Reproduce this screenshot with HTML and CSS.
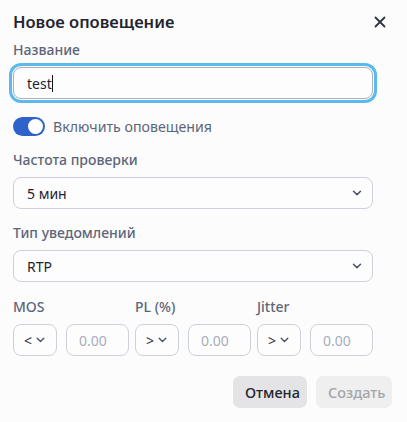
FILE: index.html
```html
<!DOCTYPE html>
<html lang="ru">
<head>
<meta charset="utf-8">
<link rel="stylesheet" href="styles.css">
</head>
<body>
<div class="dialog">
  <div class="header">
    <h1 class="title">Новое оповещение</h1>
    <button class="close" aria-label="close">
      <svg width="12" height="12" viewBox="0 0 12 12"><path d="M1.5 1.5 L10.5 10.5 M10.5 1.5 L1.5 10.5" stroke="#2d3340" stroke-width="1.8" stroke-linecap="round"/></svg>
    </button>
  </div>
  <div class="body">
    <div class="field">
      <label class="label">Название</label>
      <div class="input focus"><span class="value">test</span><span class="caret"></span></div>
    </div>
    <div class="toggle-row">
      <span class="switch"><span class="knob"></span></span>
      <span class="toggle-text">Включить оповещения</span>
    </div>
    <div class="field">
      <label class="label">Частота проверки</label>
      <div class="select"><span>5 мин</span><svg class="chev" width="10" height="6" viewBox="0 0 10 6"><path d="M1.5 1.2 L5 4.6 L8.5 1.2" fill="none" stroke="#4a5466" stroke-width="1.5" stroke-linecap="round" stroke-linejoin="round"/></svg></div>
    </div>
    <div class="field">
      <label class="label">Тип уведомлений</label>
      <div class="select"><span>RTP</span><svg class="chev" width="10" height="6" viewBox="0 0 10 6"><path d="M1.5 1.2 L5 4.6 L8.5 1.2" fill="none" stroke="#4a5466" stroke-width="1.5" stroke-linecap="round" stroke-linejoin="round"/></svg></div>
    </div>
    <div class="metrics">
      <div class="metric">
        <label class="label">MOS</label>
        <div class="pair">
          <div class="mini-select"><span>&lt;</span><svg width="9" height="6" viewBox="0 0 9 6"><path d="M1.2 1.2 L4.5 4.4 L7.8 1.2" fill="none" stroke="#4a5466" stroke-width="1.4" stroke-linecap="round" stroke-linejoin="round"/></svg></div>
          <div class="num">0.00</div>
        </div>
      </div>
      <div class="metric">
        <label class="label">PL (%)</label>
        <div class="pair">
          <div class="mini-select"><span>&gt;</span><svg width="9" height="6" viewBox="0 0 9 6"><path d="M1.2 1.2 L4.5 4.4 L7.8 1.2" fill="none" stroke="#4a5466" stroke-width="1.4" stroke-linecap="round" stroke-linejoin="round"/></svg></div>
          <div class="num">0.00</div>
        </div>
      </div>
      <div class="metric">
        <label class="label">Jitter</label>
        <div class="pair">
          <div class="mini-select"><span>&gt;</span><svg width="9" height="6" viewBox="0 0 9 6"><path d="M1.2 1.2 L4.5 4.4 L7.8 1.2" fill="none" stroke="#4a5466" stroke-width="1.4" stroke-linecap="round" stroke-linejoin="round"/></svg></div>
          <div class="num">0.00</div>
        </div>
      </div>
    </div>
  </div>
  <div class="footer">
    <button class="btn cancel">Отмена</button>
    <button class="btn create">Создать</button>
  </div>
</div>
</body>
</html>
```

FILE: styles.css
```css
* { box-sizing: border-box; }
html, body { margin: 0; padding: 0; }
body {
  background: #fcfcfd;
  font-family: "Noto Sans", "Open Sans", sans-serif;
  color: #1f2430;
  width: 407px;
  height: 422px;
  overflow: hidden;
}
.dialog {
  padding: 10px 15px 0 13px;
}
.header {
  display: flex;
  align-items: center;
  justify-content: space-between;
  height: 24px;
}
.title {
  margin: 0;
  font-size: 16.5px;
  font-weight: 600;
  line-height: 24px;
  color: #1f2430;
}
.close {
  border: 0;
  background: none;
  padding: 0;
  margin-right: 6px;
  width: 12px;
  height: 12px;
  display: flex;
}
.body {
  width: 360px;
  padding-top: 6px;
}
.field { margin-bottom: 14px; }
.label {
  display: block;
  font-size: 14px;
  font-weight: 500;
  line-height: 20px;
  color: #5c6679;
  margin-bottom: 7px;
}
.input, .select, .mini-select, .num {
  height: 32px;
  border: 1px solid #cdd2da;
  border-radius: 8px;
  background: #fdfdfd;
  display: flex;
  align-items: center;
  font-size: 14px;
}
.input { padding-left: 13px; }
.input.focus {
  border-color: #a9b0bc;
  box-shadow: 0 0 0 1px #ffffff, 0 0 0 4px #5bb9ee;
}
.value { color: #1f2430; }
.caret {
  display: inline-block;
  width: 1px;
  height: 17px;
  background: #111;
}
.toggle-row {
  display: flex;
  align-items: center;
  gap: 8px;
  margin-top: 17px;
  margin-bottom: 14px;
  height: 20px;
}
.switch {
  width: 32px;
  height: 19px;
  border-radius: 10px;
  background: #2f63cb;
  padding: 2px;
  display: flex;
  justify-content: flex-end;
}
.knob {
  width: 15px;
  height: 15px;
  border-radius: 50%;
  background: #fff;
}
.toggle-text {
  font-size: 14.2px;
  color: #5c6679;
}
.select {
  justify-content: space-between;
  padding: 0 10px 0 13px;
  color: #1f2430;
}
.metrics {
  display: grid;
  grid-template-columns: 116px 116px 116px;
  column-gap: 6px;
  margin-top: 15px;
}
.pair {
  display: flex;
  gap: 9px;
}
.mini-select {
  width: 44px;
  flex: none;
  justify-content: center;
  gap: 4px;
  color: #2a303c;
  padding-right: 1px;
}
.num {
  flex: 1;
  padding-left: 12px;
  color: #a6aebb;
}
.footer {
  display: flex;
  justify-content: flex-end;
  gap: 9px;
  margin-top: 20px;
}
.btn {
  height: 32px;
  border: 0;
  border-radius: 7px;
  font-family: inherit;
  font-size: 14.5px;
  font-weight: 500;
  padding: 0 12px;
}
.cancel {
  background: #e4e4e6;
  color: #22262e;
  width: 74px;
}
.create {
  background: #efeff0;
  color: #a3a6ab;
  width: 76px;
}
```
